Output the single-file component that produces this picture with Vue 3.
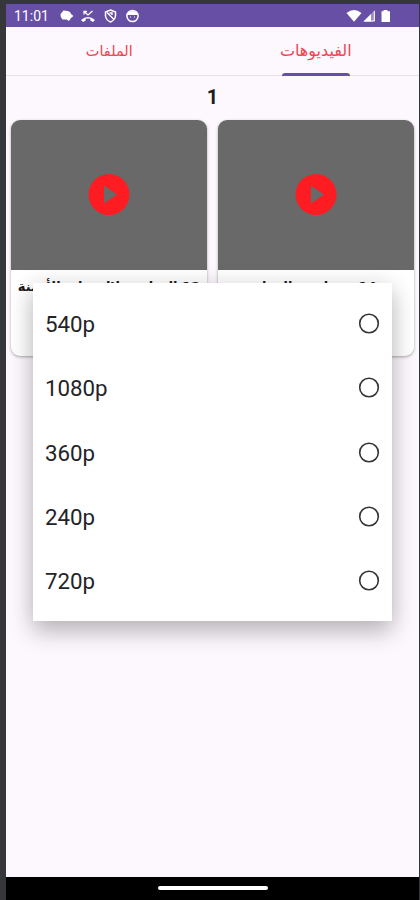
<script setup>
const options = ['540p', '1080p', '360p', '240p', '720p']
const videos = ['14 - معا نحو العمل', '12 القيادة خلال بداية الأزمنة']
</script>

<template>
  <div class="device">
    <div class="screen">
      <header class="status">
        <span class="time">11:01</span>
        <svg class="left-icons" width="80" height="16" viewBox="0 0 80 16" fill="none">
          <path d="M4.500 2.500 L9 3 Q12 4 12 6 L14.500 8 L12 10 L10 13 L7.500 11.500 L3.500 11.500 Q1 9 1.500 6Z" fill="#fff" />
          <path d="M25 3.500 L29 7 L33.500 3 M25 6.500 V3.500 H28" stroke="#fff" stroke-width="1.300" />
          <path d="M22 12 Q29 6 36 12 L34 14 L31.300 12.400 V10.800 Q29 10.200 26.700 10.800 V12.400 L24 14Z" fill="#fff" />
          <path d="M51.500 2 L56.500 4 V8 Q56 12 51.500 14 Q47 12 46.500 8 V4Z" stroke="#fff" stroke-width="1.5" />
          <path d="M48 4.500 L55 11.500 M50.500 5 H53 V7" stroke="#fff" stroke-width="1.4" />
          <circle cx="73.500" cy="8" r="5.600" stroke="#fff" stroke-width="1.5" />
          <path d="M68.500 5 Q73.500 1 78.500 5 V7 H68.500Z" fill="#fff" />
          <path d="M71 9 H72 M75 9 H76" stroke="#fff" stroke-width="1.200" />
        </svg>
        <svg class="right-icons" width="46" height="16" viewBox="0 0 46 16">
          <path d="M.5 5 Q8 -.8 15.500 5 L8 13.800Z" fill="#fff" />
          <path d="M17.500 13.500 L29 2 V13.500Z" fill="#fff" fill-opacity=".35" />
          <path d="M17.500 13.500 L25 6 V13.500Z" fill="#fff" />
          <path d="M28.300 3 V13 H18.500" fill="none" stroke="#fff" stroke-width="1" />
          <path d="M37.500 2 H41.500 V3.300 H44 V14 H35.500 V3.300 H37.500Z" fill="#fff" />
        </svg>
      </header>

      <nav class="tabs" dir="rtl">
        <div class="tab active"><span>الفيديوهات</span></div>
        <div class="tab files"><span>الملفات</span></div>
      </nav>

      <div class="count">1</div>

      <main class="grid" dir="rtl">
        <article v-for="video in videos" :key="video" class="card">
          <div class="thumb">
            <svg width="42" height="42" viewBox="0 0 42 42">
              <circle cx="21" cy="20.500" r="20.500" fill="#fd1c22" />
              <path d="M16 11.500 L29 20.500 L16 29.500Z" fill="#696969" />
            </svg>
          </div>
          <p>{{ video }}</p>
        </article>
      </main>

      <footer class="navbar"><span></span></footer>

      <section class="dialog">
        <div v-for="option in options" :key="option" class="option">
          <span>{{ option }}</span>
          <svg class="radio" width="22" height="22" viewBox="0 0 22 22">
            <circle cx="11" cy="10.500" r="9.300" fill="none" stroke="#343338" stroke-width="1.600" />
          </svg>
        </div>
      </section>
    </div>
  </div>
</template>

<style>
body { overflow: hidden; }
</style>

<style scoped>
.device {
  box-sizing: border-box;
  width: 420px;
  height: 900px;
  padding: 4px 1px 0 6px;
  background: #36373a;
  font-family: Roboto, "Noto Sans", sans-serif;
}
.screen {
  position: relative;
  display: flex;
  flex-direction: column;
  height: 896px;
  overflow: hidden;
  background: #fdf8fd;
}
.status {
  display: flex;
  align-items: center;
  flex: none;
  height: 23px;
  background: #674fa5;
  color: #fff;
}
.time { width: 45px; padding-left: 8px; font-size: 14px; }
.left-icons { flex: none; }
.right-icons { margin: 0 27px 0 auto; }
.tabs {
  display: flex;
  flex: none;
  box-sizing: border-box;
  height: 49px;
  border-bottom: 1px solid #e7e1e9;
}
.tab {
  position: relative;
  display: flex;
  justify-content: center;
  flex: 1;
  padding-top: 12px;
  color: #f04452;
  font: 16px/24px "DejaVu Sans", sans-serif;
}
.files { font-size: 14.500px; }
.active::after {
  content: "";
  position: absolute;
  bottom: -1px;
  left: 69px;
  width: 68px;
  height: 3px;
  border-radius: 3px 3px 0 0;
  background: #6650a4;
}
.count {
  height: 44px;
  flex: none;
  color: #1c1b1f;
  font: bold 20px/43px Roboto, sans-serif;
  text-align: center;
}
.grid {
  display: grid;
  grid-template-columns: 196px 196px;
  column-gap: 11px;
  padding: 0 5px;
  flex: none;
}
.card {
  height: 236px;
  overflow: hidden;
  border-radius: 9px;
  background: #fff;
  box-shadow: 0 1px 3px #0005;
}
.thumb {
  display: flex;
  align-items: center;
  justify-content: center;
  height: 150px;
  background: #696969;
}
.card p {
  margin: 7px 4px 0;
  color: #1b1b1b;
  font: bold 13px/20px "DejaVu Sans", sans-serif;
  text-align: center;
  white-space: nowrap;
}
.navbar {
  display: flex;
  justify-content: center;
  height: 23px;
  flex: none;
  margin-top: auto;
  background: #000;
}
.navbar span {
  width: 110px;
  height: 4px;
  margin-top: 9px;
  border-radius: 2px;
  background: #fff;
}
.dialog {
  position: absolute;
  top: 279px;
  left: 27px;
  box-sizing: border-box;
  width: 359px;
  height: 338px;
  padding: 9px 12px 7px;
  background: #fff;
  box-shadow: 0 12px 22px #00000038, 0 1px 22px #0000001c;
}
.option {
  display: flex;
  align-items: center;
  justify-content: space-between;
  height: 64.300px;
  color: #242328;
  font-size: 22.300px;
}
.radio { flex: none; }
</style>
